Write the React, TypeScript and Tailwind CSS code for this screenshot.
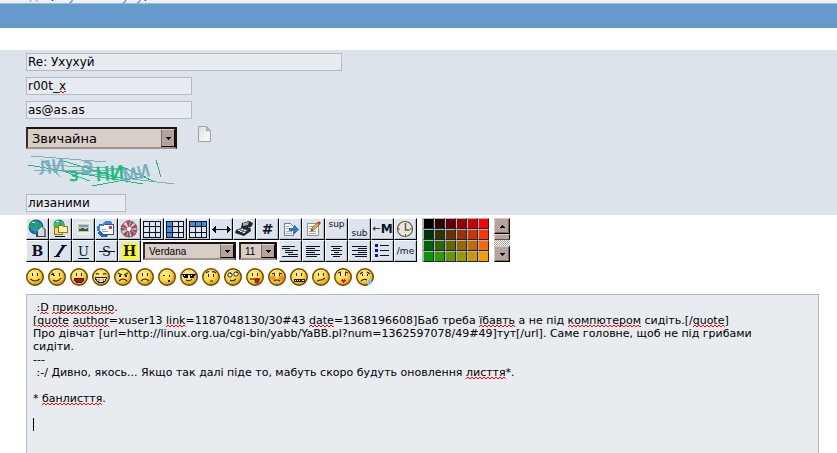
import React, { useState } from 'react';

const INK = '#0b1222';

/* ---------- Toolbar icons, drawn on a 21x20 grid ---------- */

const Icon = ({ children }: { children: React.ReactNode }) => (
    <svg width="21" height="20" viewBox="0 0 21 20" shapeRendering="crispEdges" aria-hidden="true">
        {children}
    </svg>
);

const GlobeIcon = () => (
    <Icon>
        <circle cx="9" cy="8" r="7.5" fill="#1456b8" shapeRendering="auto"/>
        <circle cx="8" cy="7" r="5.5" fill="#2d8be0" shapeRendering="auto"/>
        <path d="M3 4l3-2h4l-1 3-2 2-2 4-3-3z M11 3l4 2v5l-3 1-2-3z M6 11h3l1 3-2 1z" fill="#23a04c"/>
        <path d="M5 3h3v1H5z" fill="#c9f2ff"/>
        <path d="M12 10l3-2 4 2v8h-8v-5z" fill="#d7d9dc"/>
        <path d="M15 8l4 2v8h-2V11z" fill="#73777c"/>
        <path d="M11 17h8v1h-8z M9 13h2v5H9z" fill="#42464c"/>
    </Icon>
);

const FtpIcon = () => (
    <Icon>
        <circle cx="9" cy="6" r="5.500" fill="#1c66c2" shapeRendering="auto"/>
        <path d="M4 4l4-3 3 2-2 4-5 3z M11 2l4 3v4h-4z" fill="#3fc054"/>
        <path d="M4 8h4l1 1h3v6H4z" fill="#f5dc5c" stroke="#8a7425"/>
        <path d="M8.500 6.500h4l1 1h4v6h-9z" fill="#fff3a2" stroke="#8a7425"/>
        <path d="M5 17h10v1H5z" fill={INK}/>
        <path d="M6 2h3v1H6z" fill="#bff0ff"/>
    </Icon>
);

const PictureIcon = () => (
    <Icon>
        <path d="M4 3h13v13H4z" fill="#f0eee2"/>
        <path d="M5 5h11v8H5z" fill="#b9c8c6"/>
        <path d="M6 6h9v2H6z" fill="#6d9ed2"/>
        <path d="M6 8h9v2H6z" fill="#e2c476"/>
        <path d="M6 10l3-1 3 1 3-1v3H6z" fill="#35583c"/>
    </Icon>
);

const MailIcon = () => (
    <Icon>
        <path d="M3.500 5.500h14v10h-14z" fill="#fff" stroke="#3c4e87"/>
        <path d="M13 7h3v3h-3z" fill="#d2402f"/>
        <path d="M6 12h6v1H6z M6 10h4v1H6z" fill="#8ba0c5"/>
        <path d="M9 2h5l3 2-3 1H9l-2 2-2-1z" fill="#3c86e0"/>
        <path d="M3 12l3 1 2 3h4l-2 2H6l-4-3z" fill="#2469c4"/>
        <path d="M1 7h3v5H1z M4 5l2 2H3z" fill="#3c86e0"/>
    </Icon>
);

const FlashIcon = () => (
    <Icon>
        <g shapeRendering="auto">
            <circle cx="10" cy="10" r="8" fill="#d9d2d6" stroke="#7c6d78"/>
            <path d="M10 10L7 2l4-1z M10 10l7-5 1 4z M10 10l7 5-4 3z M10 10l-3 8-3-3z M10 10l-8-2 2-3z" fill="#cf3643"/>
            <path d="M10 10l2-8 3 1z M10 10l8 1-1 3z M10 10l1 8-3 0z M10 10l-8 2v-3z" fill="#4f7081"/>
            <circle cx="10" cy="10" r="2" fill="#fff"/>
        </g>
    </Icon>
);

const TableIcon = ({ fill }: { fill?: string }) => (
    <Icon>
        {fill && <path d={fill} fill="#3a8edb"/>}
        <path d="M1.500 2.500h17v16h-17z M7.500 2.500v16 M13.500 2.500v16 M1.500 7.500h17 M1.500 13.500h17" fill="none" stroke={INK}/>
    </Icon>
);

const RuleIcon = () => (
    <Icon>
        <path d="M1 10h19v1H1z M2 9h1v3H2z M3 8h1v5H3z M4 7h1v7H4z M18 9h1v3h-1z M17 8h1v5h-1z M16 7h1v7h-1z" fill={INK}/>
    </Icon>
);

const TypewriterIcon = () => (
    <Icon>
        <path d="M8 4l7-2 4 2-1 3-2 1 1 4-7 5-9-3 1-3 5-2z" fill="#20252b" shapeRendering="auto"/>
        <path d="M9 4l6-1-1 3-5 1z" fill="#a4abb2" shapeRendering="auto"/>
        <path d="M3 11l5-2 6 2-4 4z" fill="#6b737c" shapeRendering="auto"/>
        <path d="M4 11h2v1H4z M7 10h2v1H7z M10 11h2v1h-2z M6 12h2v1H6z M9 13h2v1H9z" fill="#e2e6ea"/>
        <path d="M14 8h3v1h-3z" fill="#8c949c"/>
    </Icon>
);

const ExportIcon = () => (
    <Icon>
        <path d="M4.500 4.500h6l3 3v9h-9z" fill="#f6f7f4" stroke="#72808a"/>
        <path d="M6 7h3v1H6z M6 9h3v1H6z M6 12h6v1H6z M6 14h6v1H6z" fill="#a5adb2"/>
        <path d="M9 9h5V6h1v1h1v1h1v1h1v1h1v1h-1v1h-1v1h-1v1h-1v1h-1v-3H9z" fill="#2a78bd"/>
    </Icon>
);

const EditIcon = () => (
    <Icon>
        <path d="M4.500 4.500h11v12h-11z" fill="#f8f8f4" stroke="#8a8f91"/>
        <path d="M6 7h6v1H6z M6 9h5v1H6z M6 12h7v1H6z M6 14h7v1H6z" fill="#9fa5aa"/>
        <g shapeRendering="auto">
            <path d="M8 12l1-3 6-6 2 2-6 6z" fill="#eaa532" stroke="#7b552a" strokeWidth=".6"/>
            <path d="M14 4l2-2 2 2-2 2z" fill="#c93b39"/>
            <path d="M8 12l1-2 1 1z" fill="#111"/>
        </g>
    </Icon>
);

const ClockIcon = () => (
    <Icon>
        <g shapeRendering="auto" fill="none" stroke="#705925">
            <circle cx="10" cy="10" r="7.500" fill="#e4e7e6" strokeWidth="1.200"/>
            <path d="M10.500 4v7h4" strokeWidth="1.500"/>
            <path d="M3 10h2 M15 10h3 M10.500 15v3" strokeWidth="1"/>
        </g>
    </Icon>
);

const ItalicIcon = () => (
    <Icon>
        <path d="M11 4h6v1h-6z M4 15h6v1H4z" fill={INK}/>
        <path d="M13 4h3L8 16H5z" fill={INK} shapeRendering="auto"/>
    </Icon>
);

/* Each bar is [x, width]; bars stand two pixels apart. */
const LinesIcon = ({ bars }: { bars: number[][] }) => (
    <Icon>
        {bars.map(([x, w], i) => (
            <rect key={i} x={x} y={5 + i * 2} width={w} height="1" fill={INK}/>
        ))}
    </Icon>
);

const ListIcon = () => (
    <Icon>
        <path d="M3 3h3v3H3z M3 8h3v3H3z M3 13h3v3H3z" fill="#14148c"/>
        <path d="M8 4h9v1H8z M8 9h9v1H8z M8 14h9v1H8z" fill={INK}/>
    </Icon>
);

/* ---------- Toolbar definitions ---------- */

type Tool = { label: string; node: React.ReactNode };

const insertTools: Tool[] = [
    { label: 'Посилання', node: <GlobeIcon/> },
    { label: 'FTP', node: <FtpIcon/> },
    { label: 'Зображення', node: <PictureIcon/> },
    { label: 'E-mail', node: <MailIcon/> },
    { label: 'Flash', node: <FlashIcon/> },
    { label: 'Таблиця', node: <TableIcon/> },
    { label: 'Стовпець', node: <TableIcon fill="M2 3h5v15H2z"/> },
    { label: 'Рядок', node: <TableIcon fill="M2 3h16v4H2z"/> },
    { label: 'Лінія', node: <RuleIcon/> },
    { label: 'Телетайп', node: <TypewriterIcon/> },
    { label: 'Код', node: <b className="text-[14px]">#</b> },
    { label: 'Цитата', node: <ExportIcon/> },
    { label: 'Редагування', node: <EditIcon/> },
    { label: 'Верхній індекс', node: <span className="self-start text-[9px] leading-[11px]">sup</span> },
    { label: 'Нижній індекс', node: <span className="self-end text-[9px] leading-[11px]">sub</span> },
    { label: 'Рухомий текст', node: <span className="flex items-center text-[10px]">←<b className="text-[12px]">M</b></span> },
    { label: 'Час', node: <ClockIcon/> },
];

const styleTools: Tool[] = [
    { label: 'Жирний', node: <b className="font-['DejaVu_Serif',serif] text-[14px]">B</b> },
    { label: 'Курсив', node: <ItalicIcon/> },
    { label: 'Підкреслений', node: <u className="font-['DejaVu_Serif',serif] text-[13px] underline-offset-2">U</u> },
    {
        label: 'Закреслений',
        node: (
            <span className="flex w-4 items-center justify-center bg-[linear-gradient(#0b1222,#0b1222)] bg-[length:100%_1px] bg-center bg-no-repeat font-['DejaVu_Serif',serif] text-[13px]">S</span>
        ),
    },
    {
        label: 'Підсвічування',
        node: (
            <b className="flex h-4 w-4 items-center justify-center bg-[#ffff00] font-['DejaVu_Serif',serif] text-[14px]">H</b>
        ),
    },
];

const alignTools: Tool[] = [
    { label: 'Форматований', node: <LinesIcon bars={[[2, 13], [2, 8], [5, 13], [5, 8], [8, 10], [2, 16]]}/> },
    { label: 'Ліворуч', node: <LinesIcon bars={[[3, 14], [3, 9], [3, 14], [3, 9], [3, 14], [3, 11]]}/> },
    { label: 'По центру', node: <LinesIcon bars={[[5, 11], [7, 7], [5, 11], [8, 5], [5, 11], [7, 7]]}/> },
    { label: 'Праворуч', node: <LinesIcon bars={[[3, 15], [9, 9], [3, 15], [9, 9], [3, 15], [6, 12]]}/> },
    { label: 'Список', node: <ListIcon/> },
    { label: 'Дія', node: <span className="text-[9px]">/me</span> },
];

const ToolButton = ({ label, node }: Tool) => (
    <button
        type="button"
        aria-label={label}
        className="flex h-[22px] w-[23px] shrink-0 items-center justify-center overflow-hidden border-t border-r border-b border-l border-t-white border-r-black border-b-black border-l-white bg-[#dce5ee] leading-none text-[#0b1222] shadow-[inset_-1px_-1px_0_#b4c3d1]"
    >
        {node}
    </button>
);

const palette = [
    ['bg-[#000000]', 'bg-[#330000]', 'bg-[#660000]', 'bg-[#990000]', 'bg-[#cc0000]', 'bg-[#ff0000]'],
    ['bg-[#003300]', 'bg-[#333300]', 'bg-[#663300]', 'bg-[#993300]', 'bg-[#cc3300]', 'bg-[#ff3300]'],
    ['bg-[#006600]', 'bg-[#336600]', 'bg-[#666600]', 'bg-[#996600]', 'bg-[#cc6600]', 'bg-[#ff6600]'],
    ['bg-[#009900]', 'bg-[#339900]', 'bg-[#669900]', 'bg-[#999900]', 'bg-[#cc9900]', 'bg-[#ff9900]'],
];

const ScrollButton = ({ label, path }: { label: string; path: string }) => (
    <button
        type="button"
        aria-label={label}
        className="flex h-4 w-4 items-center justify-center border border-t-[#d8cec8] border-r-black border-b-black border-l-[#d8cec8] bg-[#b5a39b] shadow-[inset_-1px_-1px_0_#7d6a64]"
    >
        <svg width="5" height="3" viewBox="0 0 5 3" shapeRendering="crispEdges">
            <path d={path} fill="#000"/>
        </svg>
    </button>
);

const ColorPalette = () => (
    <div className="flex h-11 gap-[5px]">
        <div className="grid shrink-0 grid-cols-[repeat(6,11px)] border-l border-[#a9b6bf]">
            {palette.flat().map((color) => (
                <button
                    key={color}
                    type="button"
                    aria-label={color.slice(4, 11)}
                    className={`h-[11px] w-[11px] border border-t-[#a9b6bf] border-r-[#1c2731] border-b-[#1c2731] border-l-[#a9b6bf] ${color}`}
                />
            ))}
        </div>
        <div className="flex w-4 flex-col">
            <ScrollButton label="Вгору" path="M2 0h1v1H2z M1 1h3v1H1z M0 2h5v1H0z"/>
            <div className="h-1.5 border border-t-[#d8cec8] border-r-black border-b-[#5e4d48] border-l-[#d8cec8] bg-[#b5a39b]"/>
            <div className="flex-1 bg-[repeating-conic-gradient(#fff_0_25%,#a89c96_0_50%)] bg-[length:2px_2px]"/>
            <ScrollButton label="Вниз" path="M0 0h5v1H0z M1 1h3v1H1z M2 2h1v1H2z"/>
        </div>
    </div>
);

/* ---------- Smileys ---------- */

const DARK = '#2b1a00';
const eyes = <path d="M6 5h1v3H6z M11 5h1v3h-1z" fill={DARK}/>;
const line = { fill: 'none', stroke: DARK, strokeWidth: 1.1, shapeRendering: 'auto' as const };

const smileys: { name: string; face: React.ReactNode }[] = [
    { name: 'smile', face: <>{eyes}<path d="M4.500 11q4.500 4 9 0" {...line}/></> },
    { name: 'wink', face: <><path d="M3 6h3v1H3z M5 7h2v1H5z M11 5h1v3h-1z" fill={DARK}/><path d="M4 5l2 1 M5 12q4 3 8-2" {...line}/></> },
    { name: 'grin', face: <>{eyes}<path d="M4 10h10q-.5 5-5 5t-5-5z" fill="#c00c12" stroke={DARK}/></> },
    {
        name: 'cheesy',
        face: (
            <>
                <path d="M4 6.500q1.500-2 3 0 M11 6.500q1.500-2 3 0" {...line}/>
                <path d="M3.500 9.500h11q-.5 5-5.500 5t-5.500-5z" fill="#fff" stroke={DARK}/>
                <path d="M4 12h10 M7 10v4 M11 10v4" stroke={DARK} strokeWidth=".4" shapeRendering="auto"/>
            </>
        ),
    },
    { name: 'angry', face: <><path d="M4 5l4 2 M14 5l-4 2 M5 13q4-4 8 0" {...line}/><path d="M5 7h2v2H5z M11 7h2v2h-2z" fill={DARK}/></> },
    { name: 'sad', face: <>{eyes}<path d="M5 13q4-4 8 0" {...line}/></> },
    { name: 'shocked', face: <path d="M5 7h2v1H5z M11 7h1v2h-1z M10 12h2v2h-2z" fill={DARK}/> },
    {
        name: 'cool',
        face: (
            <>
                <path d="M2 6h14v1H2z M3 7h5v3H4z M10 7h5l-1 3h-4z" fill="#000"/>
                <path d="M4 7h1v1H4z M11 7h1v1h-1z" fill="#fff"/>
                <path d="M6 12q4 2 6-1" {...line}/>
            </>
        ),
    },
    { name: 'huh', face: <><path d="M6 6h1v3H6z M11 6h1v3h-1z" fill={DARK}/><path d="M4 5q2-2 3-1 M10 4q2-1 4 1 M8 13h3" {...line}/></> },
    {
        name: 'rolleyes',
        face: (
            <>
                <circle cx="6" cy="7" r="2.200" fill="#fff" stroke={DARK} shapeRendering="auto"/>
                <circle cx="12" cy="6" r="2.200" fill="#fff" stroke={DARK} shapeRendering="auto"/>
                <path d="M6 5h1v1H6z M12 4h1v1h-1z" fill={DARK}/>
                <path d="M6 12q3 2 6-1" {...line}/>
            </>
        ),
    },
    { name: 'tongue', face: <>{eyes}<path d="M4 11h10" {...line}/><path d="M9 11h4v3l-1 1h-2l-1-1z" fill="#d5161c" stroke="#690808" strokeWidth=".6" shapeRendering="auto"/></> },
    {
        name: 'embarrassed',
        face: (
            <>
                <ellipse cx="5" cy="10" rx="3" ry="2.500" fill="#f0602c" opacity=".6" shapeRendering="auto"/>
                <ellipse cx="13" cy="10" rx="3" ry="2.500" fill="#f0602c" opacity=".6" shapeRendering="auto"/>
                <path d="M4 6l3-1 M11 5l3 1 M6 13q3-2 6 0" {...line}/>
                <path d="M6 6h1v2H6z M11 6h1v2h-1z" fill={DARK}/>
            </>
        ),
    },
    { name: 'lipsrsealed', face: <>{eyes}<path d="M4 11h11v3H4z" fill={DARK}/><path d="M5 12h1v1H5z M7 12h1v1H7z M9 12h1v1H9z M12 12h2v1h-2z" fill="#e8e8e8"/></> },
    { name: 'undecided', face: <>{eyes}<path d="M5 13l3-1 2 0 3-2" {...line}/></> },
    { name: 'kiss', face: <><path d="M6 5h1v3H6z M11 5h1v3h-1z" fill={DARK}/><path d="M4 5l3-1 M11 4l3 1" {...line}/><path d="M7 12h1v-1h1v1h1v-1h1v1h1v1h-1v1h-1v1H9v-1H8v-1H7z" fill="#db0c17"/></> },
    {
        name: 'cry',
        face: (
            <>
                <path d="M6 6h1v2H6z M11 6h1v2h-1z" fill={DARK}/>
                <path d="M4 6l3-2 M11 4l3 2 M5 13q3-3 6-1" {...line}/>
                <path d="M13 9l2 4v3l-2 1-1-1v-3z" fill="#53b7ee" stroke="#e4f7ff" strokeWidth=".6" shapeRendering="auto"/>
            </>
        ),
    },
];

const SmileyBar = () => (
    <div className="flex gap-1">
        {smileys.map(({ name, face }) => (
            <button key={name} type="button" aria-label={name}>
                <svg className="block" width="18" height="18" viewBox="0 0 18 18">
                    <circle cx="9" cy="9" r="8.300" fill="url(#smiley)" stroke="#6b4708" strokeWidth="1.400"/>
                    <g shapeRendering="crispEdges">{face}</g>
                </svg>
            </button>
        ))}
        <svg width="0" height="0" aria-hidden="true">
            <radialGradient id="smiley" cx=".4" cy=".35" r=".65">
                <stop offset="0" stopColor="#fff29a"/>
                <stop offset=".6" stopColor="#fcd63c"/>
                <stop offset="1" stopColor="#d59313"/>
            </radialGradient>
            <pattern id="zigzag" width="4" height="3" patternUnits="userSpaceOnUse">
                <path d="M0 1h1v1H0z M1 0h2v1H1z M3 1h1v1H3z" fill="#ff0000" shapeRendering="crispEdges"/>
            </pattern>
        </svg>
    </div>
);

/* ---------- Form parts ---------- */

const Dropdown = ({ label, value, className }: { label: string; value: string; className: string }) => (
    <div className="relative flex">
        <select
            aria-label={label}
            defaultValue={value}
            className={`appearance-none rounded-none border-2 border-t-[#1a1210] border-r-[#1a1210] border-b-[#a3938c] border-l-[#3a2c29] bg-[#d8cec8] text-black outline-none ${className}`}
        >
            <option>{value}</option>
        </select>
        <span className="pointer-events-none absolute top-0.5 right-0.5 bottom-0.5 flex w-3.5 items-center justify-center border border-t-[#d8cec8] border-r-black border-b-black border-l-[#7d6a64] bg-[#b5a39b]">
            <svg width="5" height="3" viewBox="0 0 5 3" shapeRendering="crispEdges">
                <path d="M0 0h5v1H0z M1 1h3v1H1z M2 2h1v1H2z" fill="#000"/>
            </svg>
        </span>
    </div>
);

const Captcha = () => (
    <svg width="150" height="33" viewBox="0 0 150 33" role="img" aria-label="Код перевірки">
        <g fill="none" strokeWidth="1" shapeRendering="crispEdges">
            <path d="M5 1l75 6 M8 15h70 M20 10l82 4 M15 4l20 18 M30 15l118 14 M50 18l50-4" stroke="#7fb0c0"/>
            <path d="M2 10l115 19 M34 5l60 18 M40 17l24 9 M66 31l54-10 M94 11l35 16 M130 5l5 17" stroke="#18bd7d"/>
        </g>
        <g fontFamily="DejaVu Sans, sans-serif">
            <g fill="#79abbc" stroke="#79abbc" strokeWidth=".5">
                <text x="13" y="20" fontSize="18" transform="rotate(-8 13 20)">ЛИ</text>
                <text x="54" y="16" fontSize="20" transform="rotate(14 54 16)">а</text>
                <text x="99" y="28" fontSize="17" transform="rotate(-16 99 28)">МИ</text>
            </g>
            <g fill="#18bd7d" stroke="#18bd7d" strokeWidth=".6">
                <text x="43" y="26" fontSize="18">з</text>
                <text x="70" y="26" fontSize="19" transform="rotate(-4 70 26)">НИ</text>
            </g>
        </g>
    </svg>
);

const PageIcon = () => (
    <svg className="-mt-px" width="13" height="16" viewBox="0 0 13 16" role="img" aria-label="Звичайна">
        <linearGradient id="sheet" x2="1" y2="1">
            <stop stopColor="#dedede"/>
            <stop offset="1" stopColor="#fff"/>
        </linearGradient>
        <path d="M.5.500h8l4 4v11H.5z" fill="url(#sheet)" stroke="#a2a2a2"/>
        <path d="M8.500.500v4h4z" fill="#c4c4c4" stroke="#a2a2a2"/>
    </svg>
);

const message = ` :D прикольно.
[quote author=xuser13 link=1187048130/30#43 date=1368196608]Баб треба їбавть а не під компютером сидіть.[/quote]
Про дівчат [url=http://linux.org.ua/cgi-bin/yabb/YaBB.pl?num=1362597078/49#49]тут[/url]. Саме головне, щоб не під грибами сидіти.
---
 :-/ Дивно, якось... Якщо так далі піде то, мабуть скоро будуть оновлення лисття*.

* банлисття.

`;

const misspelled = /(D(?= )|прикольно|quote|author|link|date|їбавть|компютером|банлисття|лисття)/;

const fieldClass = 'h-[18px] border border-[#afbbc9] bg-[#e8ebf0] px-px text-[12px] text-black outline-none';

/* Sits inside a hidden copy of a word and shows only the red mark below it. */
const Squiggle = () => (
    <svg className="visible absolute bottom-0 left-0 h-0.5 w-full">
        <rect width="100%" height="2" fill="url(#zigzag)"/>
    </svg>
);

/* Hidden copy of the message that places the spelling marks and the caret. */
const SpellLayer = ({ text }: { text: string }) => (
    <div
        aria-hidden="true"
        className="pointer-events-none invisible absolute inset-0 overflow-hidden border border-transparent py-1.5 pr-7 pl-1.5 text-[11px] leading-[13px] break-words whitespace-pre-wrap"
    >
        {text.split(misspelled).map((part, i) =>
            i % 2 ? <span key={i} className="relative">{part}<Squiggle/></span> : part
        )}
        <span className="visible inline-block h-[13px] w-px bg-black align-top"/>
    </div>
);

const App = () => {
    const [text, setText] = useState(message);

    return (
        <div className="flex h-screen flex-col overflow-hidden bg-white font-['DejaVu_Sans',sans-serif]">
            {/* End of the header and the title bar */}
            <div className="flex h-1 shrink-0 items-end overflow-hidden border-b border-[#a9b8c8] bg-[#edf2f7] pl-[26px] text-[12px] leading-[13px] whitespace-pre">
                <a href="#code" className="text-[#4a88c4]">Іди</a> (<a href="#sound" className="text-[#4a88c4]">слухати звуку</a>)
            </div>
            <div className="h-6 shrink-0 bg-[#6699cc]"/>

            <form className="mt-[22px] flex shrink-0 flex-col items-start gap-1.5 bg-[#dce3eb] px-[26px] py-[3px]">
                <input aria-label="Тема" className={`${fieldClass} w-[316px]`} defaultValue="Re: Ухухуй"/>
                <div className={`${fieldClass} relative flex w-[166px]`}>
                    <input aria-label="Ім'я" className="w-full bg-transparent outline-none" defaultValue="r00t_x"/>
                    <span aria-hidden="true" className="pointer-events-none invisible absolute top-0 left-px leading-4 whitespace-pre">
                        r00t_<span className="relative">x<Squiggle/></span>
                    </span>
                </div>
                <input aria-label="E-mail" className={`${fieldClass} w-[166px]`} defaultValue="as@as.as"/>
                <div className="flex gap-[21px] pt-0.5">
                    <Dropdown label="Значок" value="Звичайна" className="h-[22px] w-[151px] pl-1 text-[13px]"/>
                    <PageIcon/>
                </div>
                <Captcha/>
                <input aria-label="Код перевірки" className={`${fieldClass} w-[100px]`} defaultValue="лизаними"/>
            </form>

            {/* Toolbar */}
            <div className="flex shrink-0 gap-[5px] pt-[3px] pl-[26px]">
                <div>
                    <div className="flex">
                        {insertTools.map((tool) => <ToolButton key={tool.label} {...tool}/>)}
                    </div>
                    <div className="flex justify-between">
                        <div className="flex">
                            {styleTools.map((tool) => <ToolButton key={tool.label} {...tool}/>)}
                        </div>
                        <div className="flex items-center gap-[3px]">
                            <Dropdown label="Шрифт" value="Verdana" className="h-[18px] w-[93px] pl-1 font-['Liberation_Sans',sans-serif] text-[10px]"/>
                            <Dropdown label="Розмір" value="11" className="h-[18px] w-[38px] pl-1 font-['Liberation_Sans',sans-serif] text-[10px]"/>
                        </div>
                        <div className="flex">
                            {alignTools.map((tool) => <ToolButton key={tool.label} {...tool}/>)}
                        </div>
                    </div>
                </div>
                <ColorPalette/>
            </div>

            <div className="shrink-0 pt-1.5 pl-[26px]">
                <SmileyBar/>
            </div>

            <div className="relative mt-2 mr-[18px] ml-[26px] min-h-0 flex-1">
                <textarea
                    aria-label="Повідомлення"
                    spellCheck={false}
                    value={text}
                    onChange={(e) => setText(e.target.value)}
                    className="block h-full w-full resize-none overflow-hidden border border-b-0 border-[#afbbc9] bg-[#e8ebf0] py-1.5 pr-7 pl-1.5 text-[11px] leading-[13px] text-black outline-none"
                />
                <SpellLayer text={text}/>
            </div>
        </div>
    );
};

export default App;
